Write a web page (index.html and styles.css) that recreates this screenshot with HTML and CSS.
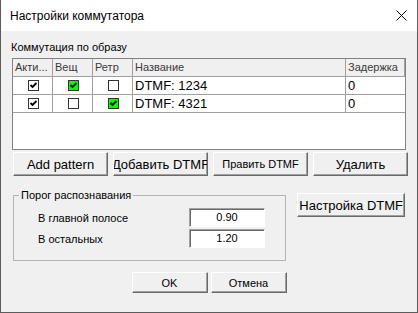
FILE: index.html
```html
<!DOCTYPE html>
<html>
<head>
    <meta charset="UTF-8" />
    <link rel="stylesheet" href="styles.css">
</head>
<body>
    <div class="window">
        <div class="titlebar">
            <span class="title">Настройки коммутатора</span>
            <svg class="close" width="11" height="11" viewBox="0 0 11 11">
                <path d="M0.5 0.5 L10.5 10.5 M10.5 0.5 L0.5 10.5" stroke="#000" stroke-width="1" fill="none"/>
            </svg>
        </div>

        <div class="client">
            <div class="caption">Коммутация по образу</div>

            <div class="list">
                <div class="grid">
                    <div class="hd">Акти...</div>
                    <div class="hd">Вещ</div>
                    <div class="hd">Ретр</div>
                    <div class="hd">Название</div>
                    <div class="hd">Задержка</div>

                    <div class="cell center"><span class="chk"><svg viewBox="0 0 9 9"><path d="M1.5 4 L3.5 6 L7.5 2"/></svg></span></div>
                    <div class="cell center"><span class="chk on"><svg viewBox="0 0 9 9"><path d="M1.5 4 L3.5 6 L7.5 2"/></svg></span></div>
                    <div class="cell center"><span class="chk"></span></div>
                    <div class="cell">DTMF: 1234</div>
                    <div class="cell last">0</div>

                    <div class="cell center"><span class="chk"><svg viewBox="0 0 9 9"><path d="M1.5 4 L3.5 6 L7.5 2"/></svg></span></div>
                    <div class="cell center"><span class="chk"></span></div>
                    <div class="cell center"><span class="chk on"><svg viewBox="0 0 9 9"><path d="M1.5 4 L3.5 6 L7.5 2"/></svg></span></div>
                    <div class="cell">DTMF: 4321</div>
                    <div class="cell last">0</div>
                </div>
            </div>

            <div class="btn-row">
                <button class="btn wide">Add pattern</button>
                <button class="btn wide">Добавить DTMF</button>
                <button class="btn wide small">Править DTMF</button>
                <button class="btn wide">Удалить</button>
            </div>

            <div class="middle">
                <fieldset class="group">
                    <legend>Порог распознавания</legend>
                    <div class="field">
                        <label>В главной полосе</label>
                        <span class="edit">0.90</span>
                    </div>
                    <div class="field">
                        <label>В остальных</label>
                        <span class="edit">1.20</span>
                    </div>
                </fieldset>
                <button class="btn dtmf">Настройка DTMF</button>
            </div>

            <div class="footer">
                <button class="btn dlg">OK</button>
                <button class="btn dlg">Отмена</button>
            </div>
        </div>
    </div>
</body>
</html>
```

FILE: styles.css
```css
body {
    margin: 0;
    font-family: 'Liberation Sans', Arial, sans-serif;
    background-color: #f0f0f0;
}
.window {
    width: 418px;
    height: 313px;
    box-sizing: border-box;
    border: 1px solid #5c5c5c;
    border-top: none;
    background-color: #f0f0f0;
    display: flex;
    flex-direction: column;
}
.titlebar {
    height: 31px;
    flex: none;
    background-color: #fff;
    display: flex;
    align-items: center;
    justify-content: space-between;
    padding: 0 10px 0 9px;
}
.title {
    font-size: 12px;
    color: #000;
    margin-top: 1px;
}
.close {
    display: block;
}
.client {
    padding: 9px 12px 0 12px;
}
.caption {
    font-size: 11px;
    line-height: 14px;
    margin-left: -2px;
    color: #000;
}
.list {
    margin: 4px -1px 0 -1px;
    height: 92px;
    box-sizing: border-box;
    border: 1px solid #828282;
    background-color: #fff;
}
.grid {
    display: grid;
    grid-template-columns: 40px 40px 40px 213px 1fr;
}
.hd, .cell {
    height: 18px;
    box-sizing: border-box;
    border-right: 1px solid #a0a0a0;
    border-bottom: 1px solid #a0a0a0;
    white-space: nowrap;
    overflow: hidden;
}
.hd {
    background-color: #f0f0f0;
    font-size: 11px;
    line-height: 17px;
    color: #3a3a3a;
    padding-left: 2px;
}
.cell {
    font-size: 13px;
    line-height: 17px;
    color: #000;
    padding-left: 2px;
}
.cell.last {
    border-right: none;
}
.cell.center {
    display: flex;
    align-items: center;
    justify-content: center;
    padding: 0 0 1px 1px;
}
.chk {
    width: 11px;
    height: 11px;
    box-sizing: border-box;
    border: 1px solid #333;
    background-color: #fff;
    display: block;
}
.chk.on {
    background-color: #00ff00;
}
.chk svg {
    display: block;
    width: 9px;
    height: 9px;
}
.chk path {
    stroke: #000;
    stroke-width: 1.8;
    fill: none;
}
.btn {
    font-family: 'Liberation Sans', Arial, sans-serif;
    font-size: 13px;
    font-weight: normal;
    color: #000;
    background-color: #f0f0f0;
    border: 1px solid;
    border-color: #fff #696969 #696969 #fff;
    box-shadow: inset -1px -1px 0 #a0a0a0;
    padding: 0;
    margin: 0;
    display: flex;
    align-items: center;
    justify-content: center;
    white-space: nowrap;
    overflow: hidden;
    box-sizing: border-box;
}
.btn-row {
    display: flex;
    gap: 5px;
    margin-top: 2px;
}
.btn.wide {
    flex: none;
    width: 95px;
    height: 24px;
}
.btn.small {
    font-size: 11px;
}
.middle {
    display: flex;
    align-items: flex-start;
    margin-top: 12px;
}
.group {
    width: 274px;
    box-sizing: border-box;
    margin: 0;
    padding: 6px 0 12px 0;
    border: 1px solid #b4b4b4;
}
.group legend {
    font-size: 11px;
    line-height: 14px;
    margin-left: 5px;
    padding: 0 2px;
    color: #000;
}
.field {
    display: flex;
    align-items: center;
    height: 19px;
}
.field + .field {
    margin-top: 2px;
}
.field label {
    font-size: 11px;
    color: #000;
    width: 151px;
    padding-left: 24px;
}
.edit {
    width: 76px;
    height: 19px;
    box-sizing: border-box;
    border: 1px solid;
    border-color: #a0a0a0 #fff #fff #a0a0a0;
    box-shadow: inset 1px 1px 0 #696969;
    background-color: #fff;
    font-size: 11px;
    line-height: 17px;
    text-align: center;
    color: #000;
}
.btn.dtmf {
    width: 108px;
    height: 24px;
    margin: 5px 0 0 11px;
}
.footer {
    display: flex;
    justify-content: center;
    gap: 3px;
    margin-top: 11px;
}
.btn.dlg {
    width: 76px;
    height: 21px;
    font-size: 11px;
}
```
